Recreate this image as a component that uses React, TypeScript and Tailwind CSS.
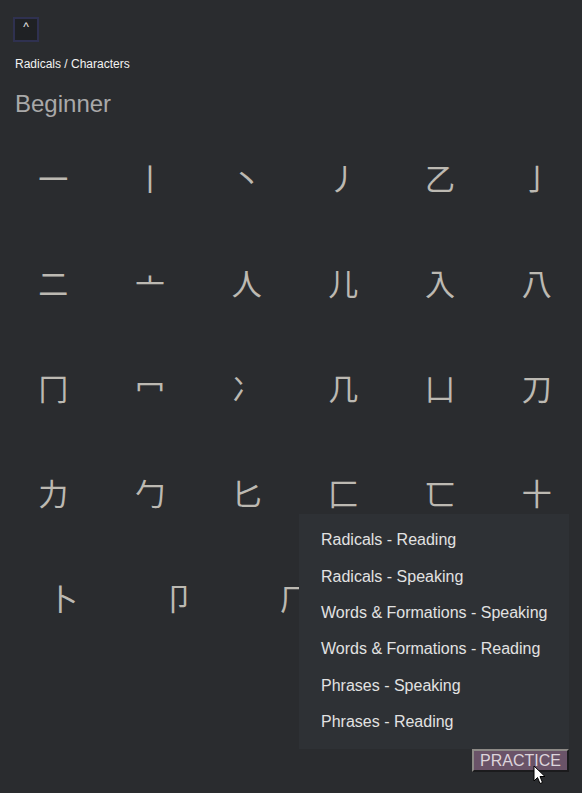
import React from "react";

const radicals = [
  "一", "丨", "丶", "丿", "乙", "亅",
  "二", "亠", "人", "儿", "入", "八",
  "冂", "冖", "冫", "几", "凵", "刀",
  "力", "勹", "匕", "匚", "匸", "十",
  "卜", "卩", "厂", "厶", "又",
];

const practiceModes = [
  "Radicals - Reading",
  "Radicals - Speaking",
  "Words & Formations - Speaking",
  "Words & Formations - Reading",
  "Phrases - Speaking",
  "Phrases - Reading",
];

const Cursor = () => (
  <svg width="13" height="20" viewBox="0 0 13 20" className="absolute left-[533px] top-[765px]">
    <path
      d="M1 1 L1 16 L4.5 12.5 L7 18.5 L9.5 17.5 L7 11.5 L12 11.5 Z"
      fill="#ffffff"
      stroke="#000000"
      strokeWidth="1"
      strokeLinejoin="round"
    />
  </svg>
);

export default function App() {
  return (
    <div className="relative min-h-[793px] w-full overflow-hidden bg-[#2a2c2f] font-['Liberation_Sans',Arial,sans-serif]">
      <div className="pl-[13px] pt-[17px]">
        <button className="flex h-[25px] w-[26px] items-start justify-center border-2 border-[#2f3150] bg-[#1f2124] pt-[1px] text-[12px] leading-[14px] text-[#e8e8e8]">
          ^
        </button>
      </div>

      <div className="flex flex-col gap-[19px] px-[15px] pt-[15px]">
        <div className="text-[12px] leading-[14px] text-[#f2f2f2]">
          Radicals / Characters
        </div>
        <h1 className="text-[24px] leading-[28px] font-normal text-[#a9a9a9]">
          Beginner
        </h1>
      </div>

      {/* radical grid */}
      <div className="ml-[5px] mt-[7px] flex w-[580px] flex-wrap">
        {radicals.map((r, i) => (
          <div
            key={i}
            className="flex h-[105px] grow basis-[90px] items-center justify-center font-['Noto_Sans_CJK_KR',sans-serif] text-[30px] text-[#bcb9b2]"
          >
            {r}
          </div>
        ))}
      </div>

      {/* practice menu */}
      <div className="absolute left-[299px] top-[514px] flex w-[270px] flex-col bg-[#2e3135] pb-[9px] pt-[8px]">
        {practiceModes.map((m) => (
          <div
            key={m}
            className="flex h-[36.4px] items-center pl-[22px] text-[16px] text-[#e2e2e2]"
          >
            {m}
          </div>
        ))}
      </div>

      <button className="absolute left-[472px] top-[749px] h-[23px] w-[97px] border-2 border-b-[#1b1b1d] border-l-[#8d8a86] border-r-[#1b1b1d] border-t-[#8d8a86] bg-[#6a5368] text-[16px] leading-[18px] text-[#ddd5dc]">
        PRACTICE
      </button>

      <Cursor />
    </div>
  );
}
